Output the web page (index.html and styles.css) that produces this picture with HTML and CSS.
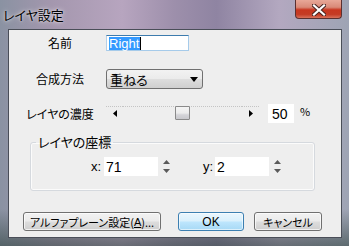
FILE: index.html
```html
<!DOCTYPE html>
<html lang="ja">
<head>
    <meta charset="UTF-8">
    <title>レイヤ設定</title>
    <link rel="stylesheet" href="styles.css">
</head>
<body>

    <div class="window">
        <div class="titlebar">
            <span class="title">レイヤ設定</span>
            <div class="close">
                <svg width="14" height="12" viewBox="0 0 14 12">
                    <path d="M2 1.5 L12 10.5 M12 1.5 L2 10.5" stroke="#4a2420" stroke-width="4.2" stroke-linecap="square"/>
                    <path d="M2 1.5 L12 10.5 M12 1.5 L2 10.5" stroke="#ffffff" stroke-width="2.2" stroke-linecap="square"/>
                </svg>
            </div>
        </div>

        <div class="client">
            <!-- name -->
            <div class="row row-name">
                <span class="lbl">名前</span>
                <div class="field field-name"><span class="sel">Right</span><span class="caret"></span></div>
            </div>

            <!-- blend mode -->
            <div class="row row-blend">
                <span class="lbl">合成方法</span>
                <div class="combo">
                    <span>重ねる</span>
                    <svg class="combo-arrow" width="8" height="5" viewBox="0 0 8 5"><path d="M0 0 H8 L4 5 Z" fill="#000"/></svg>
                </div>
            </div>

            <!-- opacity -->
            <div class="row row-opacity">
                <span class="lbl">レイヤの濃度</span>
                <div class="slider">
                    <span class="slider-btn"><svg width="4" height="7" viewBox="0 0 4 7"><path d="M4 0 V7 L0 3.5 Z" fill="#000"/></svg></span>
                    <span class="slider-track"><span class="thumb"></span></span>
                    <span class="slider-btn slider-btn-r"><svg width="4" height="7" viewBox="0 0 4 7"><path d="M0 0 V7 L4 3.5 Z" fill="#000"/></svg></span>
                </div>
                <div class="field field-num">50</div>
                <span class="pct">%</span>
            </div>

            <!-- position -->
            <fieldset class="group">
                <legend>レイヤの座標</legend>
                <div class="pos-row">
                    <span class="axis">x:</span>
                    <div class="field field-pos">71</div>
                    <svg class="spin" width="9" height="19" viewBox="0 0 9 19">
                        <path d="M1 7 L4.5 3 L8 7 Z" fill="#5a5a5a"/>
                        <path d="M1 12 L4.5 16 L8 12 Z" fill="#5a5a5a"/>
                    </svg>
                    <span class="axis axis-y">y:</span>
                    <div class="field field-pos">2</div>
                    <svg class="spin" width="9" height="19" viewBox="0 0 9 19">
                        <path d="M1 7 L4.5 3 L8 7 Z" fill="#5a5a5a"/>
                        <path d="M1 12 L4.5 16 L8 12 Z" fill="#5a5a5a"/>
                    </svg>
                </div>
            </fieldset>

            <!-- buttons -->
            <div class="buttons">
                <div class="btn btn-alpha">アルファプレーン設定(<u>A</u>)...</div>
                <div class="btn btn-ok">OK</div>
                <div class="btn btn-cancel">キャンセル</div>
            </div>
        </div>
    </div>

</body>
</html>
```

FILE: styles.css
```css
body {
    margin: 0;
    font-family: "Noto Sans CJK JP", "Liberation Sans", sans-serif;
    font-feature-settings: "palt";
}

.window {
    width: 349px;
    height: 246px;
    box-sizing: border-box;
    padding: 0 7px 8px 8px;
    background:
        linear-gradient(180deg, rgba(255,255,255,0) 0%, rgba(255,255,255,0) 85%, rgba(40,60,55,0.55) 100%),
        linear-gradient(90deg, #8a92a2 0%, #a497ae 15%, #b7a5bf 35%, #9d8fab 50%, #8f84a2 62%, #b3a8c0 80%, #9ea4b4 100%);
    display: flex;
    flex-direction: column;
}

.titlebar {
    height: 29px;
    display: flex;
    align-items: flex-start;
    justify-content: space-between;
}

.title {
    margin-top: 6px;
    margin-left: -5px;
    font-size: 13px;
    line-height: 17px;
    color: #000;
    text-shadow: 0 0 5px rgba(255,255,255,0.8), 0 0 2px rgba(255,255,255,0.6);
}

.close {
    width: 47px;
    height: 19px;
    box-sizing: border-box;
    border: 1px solid #5a3030;
    border-top: none;
    border-radius: 0 0 4px 4px;
    background: linear-gradient(180deg, #e8a898 0%, #d98a78 40%, #c8361f 55%, #c43b24 80%, #d8705a 100%);
    display: flex;
    align-items: center;
    justify-content: center;
}

.close svg {
    margin-top: 1px;
}

.client {
    flex: 1;
    background: #eeeeee;
    border: 1px solid #4a4e58;
    padding: 5px 0 0 5px;
    font-size: 12px;
}

.row {
    display: flex;
    align-items: center;
}

.lbl {
    width: 92px;
    text-align: center;
    line-height: 14px;
}

.row-name {
    height: 16px;
}

.row-blend {
    height: 20px;
    margin-top: 18px;
}

.row-opacity {
    height: 19px;
    margin-top: 15px;
}

.field {
    box-sizing: border-box;
    background: #fff;
    border: 1px solid #abadb3;
    border-top-color: #8e8f8f;
    font-family: "Liberation Sans", sans-serif;
    font-size: 13px;
    color: #000;
    display: flex;
    align-items: center;
    padding-left: 2px;
}

.field-name {
    width: 83px;
    height: 16px;
    border-color: #a6cbea;
    border-top-color: #3d7bad;
    border-left-color: #b5cfe7;
}

.sel {
    background: #3399ff;
    color: #fff;
    line-height: 13px;
    padding-right: 1px;
}

.caret {
    width: 1px;
    height: 13px;
    background: #000;
}

.combo {
    width: 97px;
    height: 20px;
    box-sizing: border-box;
    border: 1px solid #707070;
    border-radius: 3px;
    background: linear-gradient(180deg, #f2f2f2 0%, #ebebeb 48%, #dddddd 52%, #cfcfcf 100%);
    display: flex;
    align-items: center;
    justify-content: space-between;
    padding: 0 4px 0 3px;
    font-size: 13px;
}

.combo-arrow {
    margin-top: 1px;
}

.slider {
    width: 153px;
    height: 19px;
    display: flex;
    align-items: flex-start;
    padding-top: 2px;
    box-sizing: border-box;
}

.slider-btn {
    width: 17px;
    height: 14px;
    box-sizing: border-box;
    border-top: 1px dotted #c4c4c4;
    display: flex;
    align-items: center;
    justify-content: center;
    background-image: radial-gradient(circle, #dcdcdc 0.6px, transparent 0.7px);
    background-size: 2px 2px;
}

.slider-btn-r {
    background-image: none;
}

.slider-track {
    flex: 1;
    height: 14px;
    box-sizing: border-box;
    border-top: 1px dotted #c4c4c4;
    display: flex;
    padding-left: 52px;
}

.thumb {
    width: 15px;
    height: 14px;
    margin-top: -1px;
    box-sizing: border-box;
    border: 1px solid #8a8a8a;
    border-radius: 1px;
    background: linear-gradient(180deg, #f4f4f4 0%, #ececec 50%, #d4d4d8 65%, #c8c8cc 100%);
}

.field-num {
    width: 26px;
    height: 19px;
    margin-left: 9px;
    border: none;
    padding-left: 4px;
    font-size: 14px;
}

.pct {
    margin-left: 6px;
    margin-top: -6px;
    font-size: 11px;
}

.group {
    margin: 11px 0 0 16px;
    width: 285px;
    box-sizing: border-box;
    border: 1px solid #d5d9de;
    border-radius: 3px;
    padding: 0 5px 14px 5px;
    box-shadow: inset 0 0 0 1px #fbfbfb;
}

.group legend {
    padding: 0 2px;
    font-size: 13px;
    line-height: 16px;
}

.pos-row {
    display: flex;
    align-items: center;
    height: 19px;
    margin-top: 7px;
    padding-left: 55px;
}

.axis {
    width: 13px;
    font-family: "Liberation Sans", sans-serif;
    font-size: 13px;
}

.axis-y {
    margin-left: 32px;
    width: 12px;
}

.field-pos {
    width: 54px;
    height: 19px;
    border: none;
    padding-left: 2px;
    font-size: 14px;
}

.spin {
    margin-left: 4px;
}

.buttons {
    display: flex;
    margin-top: 21px;
    padding-left: 9px;
}

.btn {
    height: 19px;
    box-sizing: border-box;
    border: 1px solid #707070;
    border-radius: 3px;
    background: linear-gradient(180deg, #f2f2f2 0%, #ebebeb 48%, #dddddd 52%, #cfcfcf 100%);
    box-shadow: inset 0 0 0 1px rgba(255,255,255,0.7);
    display: flex;
    align-items: center;
    justify-content: center;
    font-size: 11px;
    line-height: 14px;
}

.btn-alpha {
    width: 138px;
}

.btn-alpha u {
    font-family: "Liberation Sans", sans-serif;
}

.btn-ok {
    width: 66px;
    margin-left: 17px;
    border-color: #3c7fb1;
    background: linear-gradient(180deg, #eaf6fd 0%, #d9f0fc 48%, #bee6fd 52%, #a7d9f5 100%);
    box-shadow: inset 0 0 0 1px rgba(255,255,255,0.6);
    font-family: "Liberation Sans", sans-serif;
    font-size: 12px;
}

.btn-cancel {
    width: 68px;
    margin-left: 10px;
}
```
